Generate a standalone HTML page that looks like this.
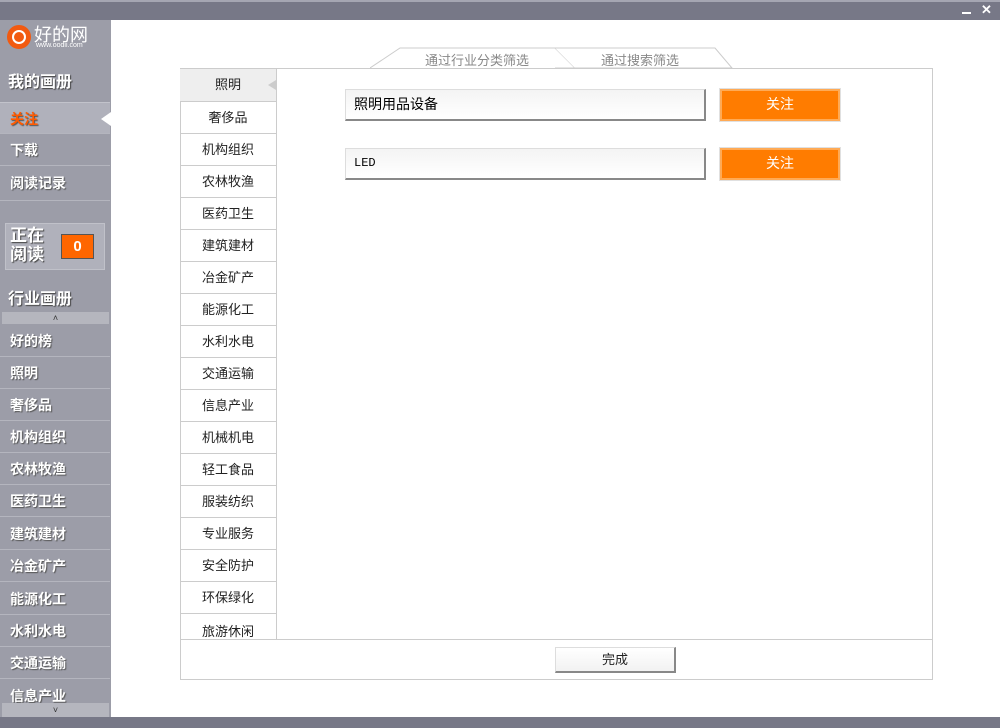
<!DOCTYPE html>
<html><head><meta charset="utf-8"><style>
*{margin:0;padding:0;box-sizing:border-box}
body{width:1000px;height:728px;position:relative;overflow:hidden;background:#fff;font-family:"Liberation Sans","Noto Sans CJK SC",sans-serif;font-size:13px}
.abs{position:absolute}
#top{left:0;top:0;width:1000px;height:20px;background:#777887;border-top:2px solid #a5a6b2}
#bot{left:0;top:717px;width:1000px;height:11px;background:#777887}
#side{left:0;top:20px;width:111px;height:697px;background:#9c9da8}
.si{position:absolute;left:0;width:110px;height:32px;line-height:32px;padding-left:10px;color:#fff;font-weight:bold;font-size:14px;border-bottom:1px solid #b4b5be;text-shadow:1px 1px 1px #555}
.hd{position:absolute;left:8px;color:#fff;font-weight:bold;font-size:16px;text-shadow:1px 1px 1px #444}
.cat{position:absolute;left:180px;width:97px;height:32px;line-height:32px;text-align:center;color:#222;border-bottom:1px solid #ccc;border-right:1px solid #ccc}
.fld{position:absolute;left:345px;width:361px;height:32px;border:1px solid #ddd;border-right:2px solid #888;border-bottom:2px solid #888;background:linear-gradient(#f4f4f4,#fff);padding-left:8px;line-height:29px}
.btn{position:absolute;left:720px;width:120px;height:32px;background:#ff7c00;border:2px solid #ffaa55;outline:1px solid #e0e0e0;color:#fff;text-align:center;line-height:27px;font-size:14px}
</style></head><body>
<div id="top" class="abs"><div class="abs" style="left:962px;top:10px;width:9px;height:2px;background:#fff"></div><div class="abs" style="left:981px;top:0px;color:#fff;font-weight:bold;font-size:13px">✕</div></div>
<div id="side" class="abs"></div>
<div class="abs" style="left:7px;top:25px;width:24px;height:24px;border-radius:50%;border:5px solid #f25a10;background:#fff"></div>
<div class="abs" style="left:14px;top:32px;width:10px;height:10px;border-radius:50%;background:#f25a10"></div>
<div class="abs" style="left:34px;top:21px;color:#fff;font-size:18px">好的网</div>
<div class="abs" style="left:36px;top:42px;color:#fff;font-size:7px">www.oodii.com</div>
<div class="hd" style="top:68px">我的画册</div>
<div class="si" style="top:102px;background:#b0b1bb;color:#ff5a00;border-top:1px solid #c2c3cb">关注</div>
<div class="abs" style="left:101px;top:112px;width:0;height:0;border-top:7px solid transparent;border-bottom:7px solid transparent;border-right:10px solid #fff"></div>
<div class="si" style="top:134px">下载</div>
<div class="si" style="top:167px;height:34px">阅读记录</div>
<div class="abs" style="left:5px;top:223px;width:100px;height:47px;background:#b0b1bb;border:1px solid #c0c1c9"></div>
<div class="abs" style="left:10px;top:226px;color:#fff;font-weight:bold;font-size:17px;line-height:19px;text-shadow:1px 1px 1px #444">正在<br>阅读</div>
<div class="abs" style="left:61px;top:234px;width:33px;height:25px;background:#ff6600;border:1px solid #555;color:#fff;font-weight:bold;text-align:center;line-height:23px;font-size:15px">0</div>
<div class="hd" style="top:285px">行业画册</div>
<div class="abs" style="left:2px;top:312px;width:107px;height:12px;background:#b5b6be;color:#333;font-size:9px;text-align:center;line-height:12px">˄</div>
<div class="si" style="top:325px">好的榜</div>
<div class="si" style="top:357px">照明</div>
<div class="si" style="top:389px">奢侈品</div>
<div class="si" style="top:421px">机构组织</div>
<div class="si" style="top:453px">农林牧渔</div>
<div class="si" style="top:485px">医药卫生</div>
<div class="si" style="top:518px">建筑建材</div>
<div class="si" style="top:550px">冶金矿产</div>
<div class="si" style="top:583px">能源化工</div>
<div class="si" style="top:615px">水利水电</div>
<div class="si" style="top:647px">交通运输</div>
<div class="si" style="top:680px;border:none">信息产业</div>
<div class="abs" style="left:2px;top:703px;width:107px;height:14px;background:#b5b6be;color:#333;font-size:9px;text-align:center;line-height:14px">˅</div>
<div id="bot" class="abs"></div>
<svg class="abs" style="left:370px;top:45px" width="380" height="26"><path d="M0 23 L30 3 L185 3 L205 23" fill="#fff" stroke="#ccc"/><path d="M185 3 L345 3 L362 23 L185 23 L205 23" fill="#fff" stroke="#ccc"/><line x1="205" y1="23.5" x2="362" y2="23.5" stroke="#ccc"/><line x1="362" y1="23.5" x2="380" y2="23.5" stroke="#ccc"/></svg>
<div class="abs" style="left:425px;top:50px;color:#888;font-size:13px">通过行业分类筛选</div>
<div class="abs" style="left:601px;top:50px;color:#888;font-size:13px">通过搜索筛选</div>
<div class="abs" style="left:180px;top:68px;width:753px;height:612px;border:1px solid #ccc"></div>
<div class="cat" style="top:69px;background:#eee;height:33px">照明</div>
<div class="abs" style="left:268px;top:80px;width:0;height:0;border-top:5px solid transparent;border-bottom:5px solid transparent;border-right:8px solid #ccc"></div>
<div class="cat" style="top:102px">奢侈品</div>
<div class="cat" style="top:134px">机构组织</div>
<div class="cat" style="top:166px">农林牧渔</div>
<div class="cat" style="top:198px">医药卫生</div>
<div class="cat" style="top:230px">建筑建材</div>
<div class="cat" style="top:262px">冶金矿产</div>
<div class="cat" style="top:294px">能源化工</div>
<div class="cat" style="top:326px">水利水电</div>
<div class="cat" style="top:358px">交通运输</div>
<div class="cat" style="top:390px">信息产业</div>
<div class="cat" style="top:422px">机械机电</div>
<div class="cat" style="top:454px">轻工食品</div>
<div class="cat" style="top:486px">服装纺织</div>
<div class="cat" style="top:518px">专业服务</div>
<div class="cat" style="top:550px">安全防护</div>
<div class="cat" style="top:582px">环保绿化</div>
<div class="cat" style="top:614px;height:26px;border-bottom:none;line-height:36px">旅游休闲</div>
<div class="abs" style="left:180px;top:639px;width:753px;height:1px;background:#ccc"></div>
<div class="abs" style="left:555px;top:647px;width:121px;height:26px;border:1px solid #ddd;border-right:2px solid #888;border-bottom:2px solid #888;background:linear-gradient(#fff,#f2f2f2);text-align:center;line-height:24px;color:#222">完成</div>
<div class="fld" style="top:89px;font-size:14px">照明用品设备</div>
<div class="btn" style="top:89px">关注</div>
<div class="fld" style="top:148px;font-family:'Liberation Mono',monospace;font-size:12px">LED</div>
<div class="btn" style="top:148px">关注</div>
</body></html>
